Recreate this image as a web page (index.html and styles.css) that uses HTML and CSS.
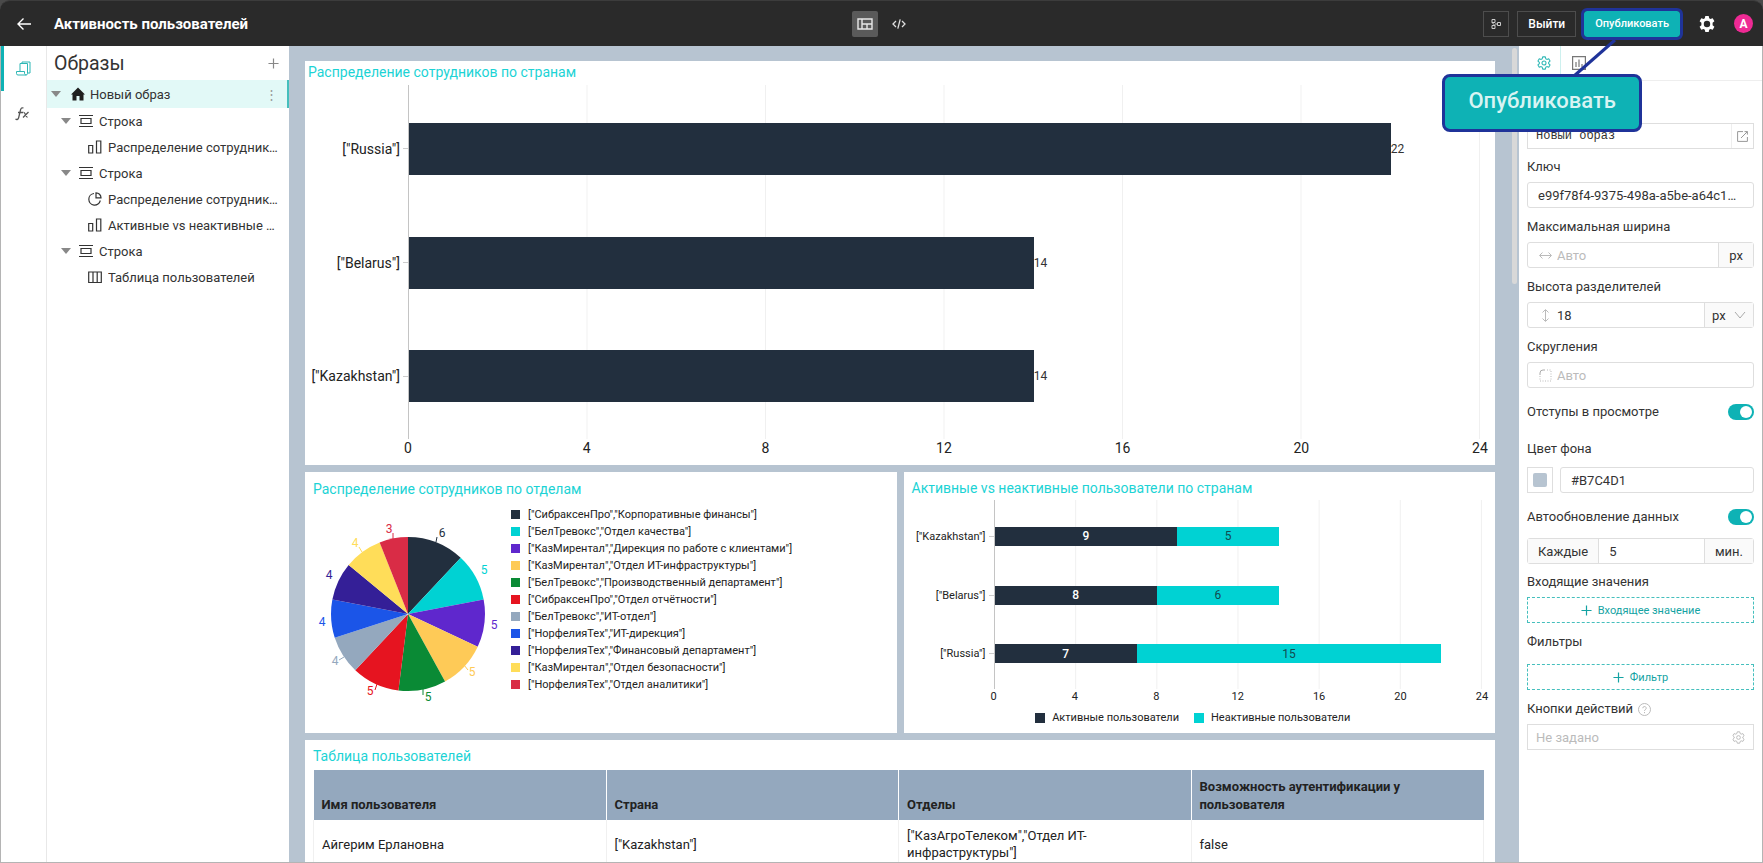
FILE: index.html
```html
<!DOCTYPE html>
<html lang="ru">
<head>
<meta charset="utf-8">
<title>Активность пользователей</title>
<link rel="stylesheet" href="styles.css">
</head>
<body>
<svg class="sprite" aria-hidden="true">
  <symbol id="row" viewBox="0 0 14 14"><path d="M0 1.500h14M0 12.500h14M2 4.500h10v5H2z" fill="none" stroke="currentColor" stroke-width="1.200"/></symbol>
  <symbol id="bars" viewBox="0 0 14 14"><path d="M.7 5.500h4v7.500h-4zM8.500 1h4.300v12H8.500z" fill="none" stroke="currentColor" stroke-width="1.200"/></symbol>
  <symbol id="pie" viewBox="0 0 14 14"><path d="M6 1.500a5.800 5.800 0 1 0 6.300 7M8 .8v5h5a5 5 0 0 0-5-5z" fill="none" stroke="currentColor" stroke-width="1.200"/></symbol>
  <symbol id="table" viewBox="0 0 14 14"><path d="M.7 2h12.600v10.500H.7zM5 2v10.500M9.200 2v10.500" fill="none" stroke="currentColor" stroke-width="1.200"/></symbol>
  <symbol id="gear" viewBox="0 0 16 16"><path d="M6.500 1h3l.5 2.100 1.300.8 2.100-.7 1.500 2.600-1.600 1.500v1.400l1.600 1.500-1.500 2.600-2.100-.7-1.300.8-.5 2.100h-3L6 12.900l-1.300-.8-2.100.7-1.500-2.600 1.600-1.500V7.300L1.100 5.800l1.500-2.600 2.100.7L6 3.100z" fill="none" stroke="currentColor" stroke-width="1.200" stroke-linejoin="round"/><circle cx="8" cy="8" r="2.300" fill="none" stroke="currentColor" stroke-width="1.200"/></symbol>
  <symbol id="gear-solid" viewBox="0 0 16 16"><path fill-rule="evenodd" fill="currentColor" d="M6.300 0h3.400l.5 2.300 1.200.7 2.300-.8 1.700 3-1.800 1.600v2.400l1.800 1.600-1.700 3-2.300-.8-1.200.7-.5 2.300H6.300l-.5-2.300-1.200-.7-2.300.8-1.700-3 1.800-1.600V6.800L.6 5.200l1.700-3 2.300.8 1.200-.7zM8 4.800a3.200 3.200 0 1 0 0 6.400 3.200 3.200 0 0 0 0-6.400z"/></symbol>
  <symbol id="plus" viewBox="0 0 12 12"><path d="M6 .5v11M.5 6h11" stroke="currentColor" stroke-width="1.300"/></symbol>
</svg>
<div class="app">
  <header class="topbar">
    <div class="topbar-left">
      <button class="plain" aria-label="Назад"><svg width="14" height="14" viewBox="0 0 14 14"><path d="M14 7H1M6.500 1.500 1 7l5.500 5.500" fill="none" stroke="#fff" stroke-width="1.400"/></svg></button>
      <h1>Активность пользователей</h1>
    </div>
    <div class="modes">
      <button class="mode active" aria-label="Макет"><svg width="16" height="12" viewBox="0 0 16 12"><path d="M1 1h14v10H1zM5 1v10M5 6h10M10 6v5" fill="none" stroke="#e8e8e8" stroke-width="1.400"/></svg></button>
      <button class="mode" aria-label="Код"><svg width="14" height="10" viewBox="0 0 14 10"><path d="M4 2 1 5l3 3M10 2l3 3-3 3M8.200.3 5.800 9.700" fill="none" stroke="#ddd" stroke-width="1.300"/></svg></button>
    </div>
    <div class="topbar-right">
      <button class="outlined square" aria-label="Связи"><svg width="10" height="10" viewBox="0 0 10 10"><g fill="none" stroke="#ccc"><path d="M1 .5h3v3H1zM1 6.500h3v3H1zM1 3.500l3 3M4 5h2M6.500 3.500h3v3h-3z"/></g></svg></button>
      <button class="outlined">Выйти</button>
      <div class="publish-wrap">
        <button class="publish">Опубликовать</button>
        <svg class="leader" width="50" height="42" viewBox="0 0 50 42"><path d="M45 2 4 38" stroke="#1f3399" stroke-width="3"/></svg>
        <div class="callout">Опубликовать</div>
      </div>
      <button class="plain" aria-label="Настройки"><svg class="white" width="16" height="16"><use href="#gear-solid"/></svg></button>
      <span class="avatar">A</span>
    </div>
  </header>
  <div class="main">
    <nav class="rail">
      <button class="rail-item active" aria-label="Образы"><svg width="15" height="15" viewBox="0 0 15 15"><g fill="none" stroke="currentColor"><path d="M4 10.500V2.500h7.500v9.500a1.500 1.500 0 0 1-1.500 2H2a1.500 1.500 0 0 1-1.500-1.500v-2H8.500v2a1.300 1.300 0 0 0 2 1M6 2.500V1h8v11h-2"/></g></svg></button>
      <button class="rail-item" aria-label="Функции"><svg width="15" height="14" viewBox="0 0 15 14"><path d="M.5 12c1.500 1 2.700.4 3.200-1.500L5.500 3C6 1 7 .5 8.500 1M3 5.500h5M8.500 5.500c2-.5 2 5 4 4.500M13.500 5 8 10.500" fill="none" stroke="currentColor" stroke-width="1.300"/></svg></button>
    </nav>
    <aside class="tree">
      <div class="tree-head"><h2>Образы</h2><button class="plain grey" aria-label="Добавить"><svg width="11" height="11"><use href="#plus"/></svg></button></div>
      <ul>
        <li class="l1 selected"><i class="caret"></i><svg width="14" height="14" viewBox="0 0 14 14"><path d="M7 .5 14 7.500h-1.500V13.500h-4V9h-3v4.500h-4V7.500H0z" fill="#1f1f1f"/></svg><span>Новый образ</span><b class="dots">⋮</b></li>
        <li class="l2"><i class="caret"></i><svg width="14" height="14"><use href="#row"/></svg><span>Строка</span></li>
        <li class="l3"><svg width="14" height="14"><use href="#bars"/></svg><span>Распределение сотрудников по странам</span></li>
        <li class="l2"><i class="caret"></i><svg width="14" height="14"><use href="#row"/></svg><span>Строка</span></li>
        <li class="l3"><svg width="14" height="14"><use href="#pie"/></svg><span>Распределение сотрудников по отделам</span></li>
        <li class="l3"><svg width="14" height="14"><use href="#bars"/></svg><span>Активные vs неактивные пользователи</span></li>
        <li class="l2"><i class="caret"></i><svg width="14" height="14"><use href="#row"/></svg><span>Строка</span></li>
        <li class="l3"><svg width="14" height="14"><use href="#table"/></svg><span>Таблица пользователей</span></li>
      </ul>
    </aside>
    <main class="canvas">
      <div class="board">
        <section class="card chart big">
          <h3>Распределение сотрудников по странам</h3>
          <div class="chart-body">
            <div class="cats"><span>["Russia"]</span><span>["Belarus"]</span><span>["Kazakhstan"]</span></div>
            <div class="plot">
              <div class="track"><div class="bar dark" style="width:91.667%"></div><span>22</span></div>
              <div class="track"><div class="bar dark" style="width:58.333%"></div><span>14</span></div>
              <div class="track"><div class="bar dark" style="width:58.333%"></div><span>14</span></div>
            </div>
            <div class="ticks"><span>0</span><span>4</span><span>8</span><span>12</span><span>16</span><span>20</span><span>24</span></div>
          </div>
        </section>
        <div class="pair">
          <section class="card pie-card">
            <h3>Распределение сотрудников по отделам</h3>
            <div class="pie-body">
              <svg class="pie" width="190" height="190" viewBox="-95 -95 190 190">
                <g class="slices" transform="rotate(-90)">
                  <circle r="38.500" pathLength="50" stroke="#222f3e" stroke-dasharray="6 44"/>
                  <circle r="38.500" pathLength="50" stroke="#00d2d3" stroke-dasharray="5 45" stroke-dashoffset="-6"/>
                  <circle r="38.500" pathLength="50" stroke="#5f27cd" stroke-dasharray="5 45" stroke-dashoffset="-11"/>
                  <circle r="38.500" pathLength="50" stroke="#feca57" stroke-dasharray="5 45" stroke-dashoffset="-16"/>
                  <circle r="38.500" pathLength="50" stroke="#0a8a35" stroke-dasharray="5 45" stroke-dashoffset="-21"/>
                  <circle r="38.500" pathLength="50" stroke="#e61420" stroke-dasharray="5 45" stroke-dashoffset="-26"/>
                  <circle r="38.500" pathLength="50" stroke="#94a8be" stroke-dasharray="4 46" stroke-dashoffset="-31"/>
                  <circle r="38.500" pathLength="50" stroke="#1b55e8" stroke-dasharray="4 46" stroke-dashoffset="-35"/>
                  <circle r="38.500" pathLength="50" stroke="#341f97" stroke-dasharray="4 46" stroke-dashoffset="-39"/>
                  <circle r="38.500" pathLength="50" stroke="#ffdd59" stroke-dasharray="4 46" stroke-dashoffset="-43"/>
                  <circle r="38.500" pathLength="50" stroke="#d92c46" stroke-dasharray="3 47" stroke-dashoffset="-47"/>
                </g>
                <g fill="none">
                  <path d="M28-72 29-77" stroke="#222f3e"/><path d="M-15-75-15-81" stroke="#d92c46"/><path d="M-46-62-49-67" stroke="#ffdd59"/>
                  <path d="M-64 43-69 46" stroke="#94a8be"/><path d="M-31 70-33 76" stroke="#e61420"/><path d="M15 75 15 81" stroke="#0a8a35"/><path d="M56 51 60 56" stroke="#feca57"/>
                </g>
                <g class="pie-text">
                  <text x="34" y="-77" fill="#222f3e">6</text><text x="76" y="-40" fill="#00d2d3">5</text><text x="86" y="15" fill="#5f27cd">5</text><text x="64" y="62" fill="#feca57">5</text><text x="20" y="87" fill="#0a8a35">5</text><text x="-38" y="81" fill="#e61420">5</text><text x="-73" y="51" fill="#94a8be">4</text><text x="-86" y="12" fill="#1b55e8">4</text><text x="-79" y="-35" fill="#341f97">4</text><text x="-53" y="-67" fill="#ffdd59">4</text><text x="-19" y="-81" fill="#d92c46">3</text>
                </g>
              </svg>
              <ul class="legend">
                <li><i style="background:#222f3e"></i>["СибраксенПро","Корпоративные финансы"]</li>
                <li><i style="background:#00d2d3"></i>["БелТревокс","Отдел качества"]</li>
                <li><i style="background:#5f27cd"></i>["КазМирентал","Дирекция по работе с клиентами"]</li>
                <li><i style="background:#feca57"></i>["КазМирентал","Отдел ИТ-инфраструктуры"]</li>
                <li><i style="background:#0a8a35"></i>["БелТревокс","Производственный департамент"]</li>
                <li><i style="background:#e61420"></i>["СибраксенПро","Отдел отчётности"]</li>
                <li><i style="background:#94a8be"></i>["БелТревокс","ИТ-отдел"]</li>
                <li><i style="background:#1b55e8"></i>["НорфелияТех","ИТ-дирекция"]</li>
                <li><i style="background:#341f97"></i>["НорфелияТех","Финансовый департамент"]</li>
                <li><i style="background:#ffdd59"></i>["КазМирентал","Отдел безопасности"]</li>
                <li><i style="background:#d92c46"></i>["НорфелияТех","Отдел аналитики"]</li>
              </ul>
            </div>
          </section>
          <section class="card chart small">
            <h3>Активные vs неактивные пользователи по странам</h3>
            <div class="chart-body">
              <div class="cats"><span>["Kazakhstan"]</span><span>["Belarus"]</span><span>["Russia"]</span></div>
              <div class="plot">
                <div class="track"><div class="bar dark" style="width:37.500%">9</div><div class="bar cyan" style="width:20.833%">5</div></div>
                <div class="track"><div class="bar dark" style="width:33.333%">8</div><div class="bar cyan" style="width:25%">6</div></div>
                <div class="track"><div class="bar dark" style="width:29.167%">7</div><div class="bar cyan" style="width:62.500%">15</div></div>
              </div>
              <div class="ticks"><span>0</span><span>4</span><span>8</span><span>12</span><span>16</span><span>20</span><span>24</span></div>
            </div>
            <div class="series"><span><i class="dark"></i>Активные пользователи</span><span><i class="cyan"></i>Неактивные пользователи</span></div>
          </section>
        </div>
        <section class="card table-card">
          <h3>Таблица пользователей</h3>
          <table>
            <thead><tr><th>Имя пользователя</th><th>Страна</th><th>Отделы</th><th>Возможность аутентификации у пользователя</th></tr></thead>
            <tbody><tr><td>Айгерим Ерлановна</td><td>["Kazakhstan"]</td><td>["КазАгроТелеком","Отдел ИТ-инфраструктуры"]</td><td>false</td></tr></tbody>
          </table>
        </section>
      </div>
      <div class="thumb"></div>
    </main>
    <aside class="panel">
      <div class="tabs">
        <button class="tab active" aria-label="Параметры"><svg width="14" height="14"><use href="#gear"/></svg></button>
        <button class="tab" aria-label="Данные"><svg width="14" height="14" viewBox="0 0 14 14"><path d="M.6.600h12.800v12.800H.6zM4 11V6M7 11V3.500M10 11V8" fill="none" stroke="currentColor" stroke-width="1.200"/></svg></button>
      </div>
      <form class="form">
        <div class="field first">
          <div class="control sharp"><input class="mono" aria-label="Название" value="Новый образ"><button type="button" class="open" aria-label="Открыть"><svg width="11" height="11" viewBox="0 0 11 11"><path d="M6 .6H.6v9.800h9.800V6M4 7 10.400.6M7.500.600h2.900v3" fill="none" stroke="#999"/></svg></button></div>
        </div>
        <div class="field">
          <label for="key">Ключ</label>
          <div class="control"><input id="key" value="e99f78f4-9375-498a-a5be-a64c1b20"></div>
        </div>
        <div class="field">
          <label for="maxw">Максимальная ширина</label>
          <div class="control icon"><svg width="13" height="9" viewBox="0 0 13 9"><path d="M.8 4.500h11.400M3.500 1.500l-3 3 3 3M9.500 1.500l3 3-3 3" fill="none" stroke="#bbb"/></svg><input id="maxw" placeholder="Авто"><span class="addon">px</span></div>
        </div>
        <div class="field">
          <label for="gap">Высота разделителей</label>
          <div class="control icon"><svg width="13" height="13" viewBox="0 0 13 13"><path d="M6.500 1v11M3.500 3.500l3-3 3 3M3.500 9.500l3 3 3-3" fill="none" stroke="#bbb"/></svg><input id="gap" value="18"><div class="unit"><select aria-label="Единица"><option>px</option></select><svg width="12" height="8" viewBox="0 0 12 8"><path d="M1 1l5 6 5-6" fill="none" stroke="#aaa"/></svg></div></div>
        </div>
        <div class="field">
          <label for="radius">Скругления</label>
          <div class="control icon"><svg width="13" height="13" viewBox="0 0 13 13"><path d="M1 6V4a3 3 0 0 1 3-3h2" fill="none" stroke="#aaa"/><path d="M8 1h4v11H1V7" fill="none" stroke="#bbb" stroke-dasharray="1 1.500"/></svg><input id="radius" placeholder="Авто"></div>
        </div>
        <div class="switch-row first"><label for="pad">Отступы в просмотре</label><input type="checkbox" id="pad" checked></div>
        <div class="field">
          <label for="hex">Цвет фона</label>
          <div class="color"><input type="color" value="#b7c4d1" aria-label="Выбор цвета"><div class="control"><input id="hex" value="#B7C4D1"></div></div>
        </div>
        <div class="switch-row"><label for="auto">Автообновление данных</label><input type="checkbox" id="auto" checked></div>
        <div class="control group"><label class="addon" for="every">Каждые</label><input id="every" value="5"><span class="addon">мин.</span></div>
        <div class="field">
          <h4>Входящие значения</h4>
          <button type="button" class="dashed"><svg width="11" height="11"><use href="#plus"/></svg>Входящее значение</button>
        </div>
        <div class="field spaced">
          <h4>Фильтры</h4>
          <button type="button" class="dashed"><svg width="11" height="11"><use href="#plus"/></svg>Фильтр</button>
        </div>
        <div class="field">
          <label for="actions">Кнопки действий <svg width="13" height="13" viewBox="0 0 13 13"><g fill="none" stroke="#bbb"><circle cx="6.500" cy="6.500" r="6"/><path d="M4.800 5.200a1.700 1.700 0 1 1 2.500 1.500q-.8.400-.8 1.300M6.500 9v1.200"/></g></svg></label>
          <div class="control sharp"><input id="actions" placeholder="Не задано"><svg class="tail" width="13" height="13"><use href="#gear"/></svg></div>
        </div>
      </form>
    </aside>
  </div>
</div>
</body>
</html>
```
FILE: styles.css
```css
* { box-sizing: border-box; }
body { margin: 0; background: #4a4a4a; font-family: Roboto, "Liberation Sans", sans-serif; font-size: 13px; color: #333; }
h1, h2, h3, h4, ul { margin: 0; padding: 0; font-weight: 400; list-style: none; }
button, input, select { font: inherit; color: inherit; margin: 0; padding: 0; border: 0; background: none; border-radius: 0; outline: 0; }
svg { display: block; flex: none; }
.sprite { display: none; }
.app { height: 100vh; display: flex; flex-direction: column; overflow: hidden; }
.plain { display: flex; align-items: center; }
.grey { color: #888; }
.white { color: #fff; }

.topbar { display: grid; grid-template-columns: 1fr auto 1fr; align-items: center; height: 46px; flex: none; background: #2a2a2a; border-top: 1px solid #3c3c3c; border-radius: 10px 10px 0 0; color: #fff; }
.topbar-left { display: flex; align-items: center; gap: 23px; padding-left: 17px; }
.topbar h1 { font-size: 15px; font-weight: 700; }
.modes { display: flex; gap: 8px; }
.mode { width: 26px; height: 26px; display: grid; place-items: center; border-radius: 2px; }
.mode.active { background: #5a5a5a; }
.topbar-right { display: flex; align-items: center; justify-content: flex-end; padding-right: 10px; }
.outlined { height: 26px; padding: 0 10px; margin-right: 8px; border: 1px solid #4d4d4d; font-size: 12px; font-weight: 500; }
.outlined.square { width: 26px; padding: 0; display: grid; place-items: center; }
.publish-wrap { position: relative; margin-right: 19px; }
.publish { display: block; height: 26px; padding: 0 11px; background: #0eb2b5; border-radius: 3px; outline: 3px solid #1f3399; font-size: 11px; font-weight: 500; }
.leader { position: absolute; left: -14px; top: 27px; z-index: 2; }
.callout { position: absolute; left: -142px; top: 63px; width: 200px; height: 58px; z-index: 3; display: grid; place-items: center; padding-bottom: 4px; background: #0eb2b5; border: 3px solid #1f3399; border-radius: 8px; color: #d8f4f3; font-size: 22px; font-weight: 500; }
.avatar { width: 19px; height: 19px; margin-left: 19px; border-radius: 50%; background: #ee2a94; display: grid; place-items: center; font-size: 12px; font-weight: 700; }

.main { flex: 1; min-height: 0; display: flex; background: #fff; border: solid #b4b4b4; border-width: 0 1px 1px; }
.rail { width: 46px; flex: none; border-right: 1px solid #e8e8e8; }
.rail-item { width: 100%; height: 45px; display: grid; place-items: center; padding-right: 2px; color: #555; }
.rail-item.active { padding-right: 4px; color: #2db7b5; border-left: 3px solid #0eb2b5; }
.tree { width: 242px; flex: none; }
.tree-head { display: flex; align-items: center; justify-content: space-between; height: 34px; padding: 0 10px 0 7px; }
.tree li { display: flex; align-items: center; height: 26px; padding-right: 9px; color: #333; }
.tree li.selected { height: 28px; background: #e2f9f7; border-right: 2px solid #45bfbd; }
.tree li span { flex: 1; overflow: hidden; white-space: nowrap; text-overflow: ellipsis; }
.caret { border: solid transparent; border-width: 6px 5px 0; border-top-color: #888; }
.l1 { padding-left: 4px; }
.l1 svg { margin: 0 5px 0 10px; }
.l2 { padding-left: 14px; }
.l2 svg { margin: 0 6px 0 8px; }
.l3 { padding-left: 41px; }
.l3 svg { margin-right: 6px; }
.dots { font-weight: 400; font-size: 13px; color: #999; }

.canvas { position: relative; flex: 1; min-width: 0; overflow: hidden; background: #b7c4d1; padding: 15px 24px 0 16px; }
.thumb { position: absolute; top: 2px; right: 2px; width: 5px; height: 236px; border-radius: 3px; background: #d8d8d8; }
.board { display: grid; gap: 7px; }
.card { background: #fff; }
.card h3 { font-size: 14px; line-height: 20px; color: #1cd3d5; }
.chart-body { display: grid; grid-template-columns: 103px 1fr; }
.cats, .plot { display: flex; flex-direction: column; padding: 7px 0 6px; }
.cats span { flex: 1; display: flex; align-items: center; justify-content: flex-end; gap: 3px; color: #222; }
.cats span::after { content: ""; width: 5px; height: 1px; background: #ccc; }
.plot { height: 354px; border-left: 1px solid #c4c4c4; background: linear-gradient(to left, #f0f0f0 1px, transparent 1px) 0 0 / calc(100% / 6) 100%; }
.track { flex: 1; display: flex; align-items: center; font-size: 12px; }
.bar { height: 52px; flex: none; display: grid; place-items: center; }
.dark { background: #222f3e; color: #fff; }
.cyan { background: #00d2d3; color: #134a50; }
.ticks { grid-column: 2; display: flex; justify-content: space-between; color: #222; }
.ticks span { width: 0; display: flex; justify-content: center; }
.big { padding: 1px 15px 8px 0; }
.big h3 { padding-left: 3px; margin-bottom: 3px; }
.big .cats, .big .ticks { font-size: 14px; line-height: 18px; }
.pair { display: grid; grid-template-columns: minmax(0, 1fr) minmax(0, 1fr); gap: 7px; }
.small { padding: 6px 13px 8px 0; }
.small h3 { padding-left: 8px; margin-bottom: 2px; }
.small .chart-body { grid-template-columns: 90px 1fr; }
.small .cats, .small .ticks { font-size: 11px; line-height: 15px; }
.small .plot { height: 189px; }
.small .bar { height: 19px; }
.small .dark { font-weight: 500; }
.series { display: flex; justify-content: center; gap: 15px; padding-top: 6px; font-size: 11px; line-height: 15px; color: #222; }
.series span { display: flex; align-items: center; gap: 7px; }
.series i { width: 10px; height: 10px; }
.pie-card { padding: 7px 8px 0; }
.pie-body { display: flex; gap: 8px; }
.pie { margin: 20px 0 0; overflow: visible; }
.slices circle { fill: none; stroke-width: 77; }
.pie-text { font-size: 12px; text-anchor: middle; }
.legend { padding-top: 7px; font-size: 11px; line-height: 17px; color: #222; }
.legend li { display: flex; align-items: center; gap: 8px; white-space: nowrap; }
.legend i { width: 9px; height: 9px; }
.table-card { padding: 6px 11px 0 8px; }
table { width: 100%; margin-top: 4px; border-collapse: collapse; table-layout: fixed; font-size: 13px; line-height: 17px; color: #222; }
th { height: 50px; padding: 8px 8px 6px; vertical-align: bottom; text-align: left; line-height: 18px; font-weight: 700; background: #94a8be; }
th + th { border-left: 1px solid #fff; }
td { padding: 7px 8px; border: 1px solid #f0f0f0; border-width: 0 1px 1px; }

.panel { width: 243px; flex: none; }
.tabs { display: flex; height: 35px; border-bottom: 1px solid #eee; }
.tab { width: 35px; display: grid; place-items: center; color: #777; }
.tab.active { width: 42px; padding-left: 8px; color: #2db7b5; border-right: 1px solid #cdf0ee; }
.form { padding: 42px 8px 0; }
.field { margin-bottom: 9px; }
.field.first { margin-bottom: 8px; }
.field label, .field h4, .switch-row label { display: flex; align-items: center; gap: 5px; line-height: 20px; }
.field > label, .field > h4 { margin-bottom: 5px; }
.control { display: flex; align-items: center; flex: 1; height: 26px; border: 1px solid #dedede; border-radius: 3px; }
.control.sharp { border-radius: 0; }
.control input { flex: 1; width: 0; height: 100%; padding: 0 10px; text-overflow: ellipsis; }
.control.sharp input { padding-left: 8px; }
.control.icon { padding-left: 11px; }
.control.icon input { padding: 0 5px; }
::placeholder { color: #bbb; opacity: 1; }
.control .mono { font-family: "Liberation Mono", monospace; font-size: 12px; }
.open { width: 22px; height: 100%; display: grid; place-items: center; border-left: 1px solid #eee; }
.addon { display: flex; align-items: center; height: 100%; padding: 0 10px; background: #fafafa; border-left: 1px solid #dedede; }
.unit { display: flex; align-items: center; height: 100%; padding: 0 7px; background: #fafafa; border-left: 1px solid #dedede; }
.unit select { appearance: none; width: 22px; }
.group label.addon { border-left: 0; border-right: 1px solid #dedede; }
.switch-row { display: flex; align-items: center; justify-content: space-between; margin: 14px 0 11px; }
.switch-row.first { margin-bottom: 17px; }
.switch-row input { appearance: none; width: 26px; height: 16px; border-radius: 8px; padding: 2px; background: #0eb2b5; display: flex; justify-content: flex-end; }
.switch-row input::before { content: ""; width: 12px; height: 12px; border-radius: 50%; background: #fff; }
.color { display: flex; gap: 7px; padding-top: 3px; }
input[type="color"] { width: 26px; height: 26px; padding: 5px; border: 1px solid #dedede; }
input[type="color"]::-webkit-color-swatch-wrapper { padding: 0; }
input[type="color"]::-webkit-color-swatch { border: 0; border-radius: 2px; }
.group { margin-bottom: 8px; }
.dashed { width: 100%; height: 26px; display: flex; align-items: center; justify-content: center; gap: 6px; border: 1px dashed #45bfbd; color: #14a3a3; font-size: 11px; }
.spaced h4 { margin-bottom: 12px; }
.tail { color: #bbb; margin-right: 8px; }
```
